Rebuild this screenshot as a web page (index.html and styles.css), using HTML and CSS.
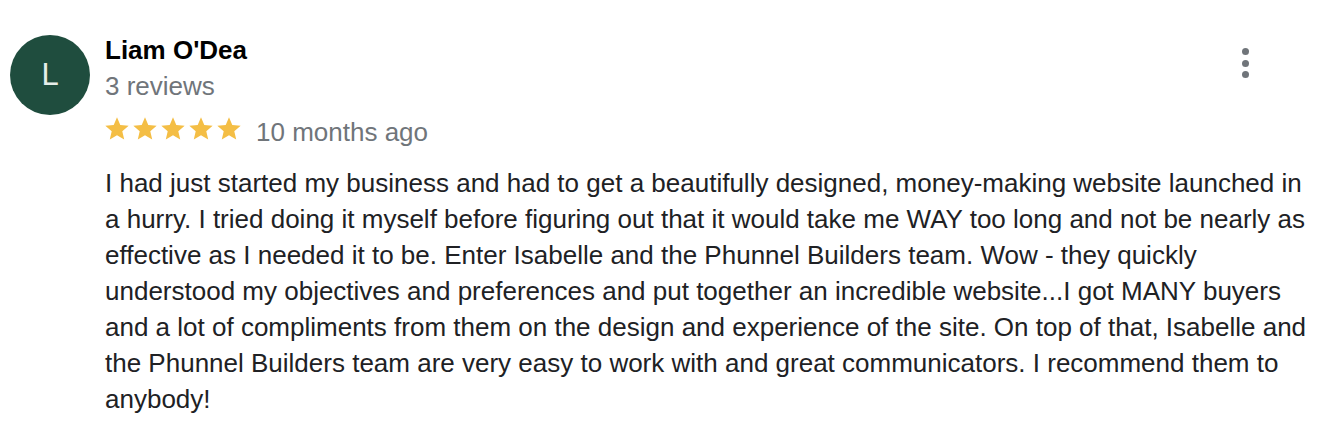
FILE: index.html
```html
<!DOCTYPE html>
<html lang="en">
<head>
<meta charset="utf-8">
<title>Review</title>
<link rel="stylesheet" href="styles.css">
</head>
<body>
<div class="review">
  <div class="avatar">L</div>
  <div class="content">
    <div class="header">
      <div class="author">
        <div class="name">Liam O'Dea</div>
        <div class="count">3 reviews</div>
      </div>
      <button class="menu" aria-label="More options">
        <span class="dot"></span><span class="dot"></span><span class="dot"></span>
      </button>
    </div>
    <div class="rating">
      <div class="stars">
        <svg class="star" viewBox="0 0 24 24"><path d="M12 17.27L18.18 21l-1.64-7.03L22 9.24l-7.19-.61L12 2 9.19 8.63 2 9.24l5.46 4.73L5.82 21z"/></svg>
        <svg class="star" viewBox="0 0 24 24"><path d="M12 17.27L18.18 21l-1.64-7.03L22 9.24l-7.19-.61L12 2 9.19 8.63 2 9.24l5.46 4.73L5.82 21z"/></svg>
        <svg class="star" viewBox="0 0 24 24"><path d="M12 17.27L18.18 21l-1.64-7.03L22 9.24l-7.19-.61L12 2 9.19 8.63 2 9.24l5.46 4.73L5.82 21z"/></svg>
        <svg class="star" viewBox="0 0 24 24"><path d="M12 17.27L18.18 21l-1.64-7.03L22 9.24l-7.19-.61L12 2 9.19 8.63 2 9.24l5.46 4.73L5.82 21z"/></svg>
        <svg class="star" viewBox="0 0 24 24"><path d="M12 17.27L18.18 21l-1.64-7.03L22 9.24l-7.19-.61L12 2 9.19 8.63 2 9.24l5.46 4.73L5.82 21z"/></svg>
      </div>
      <span class="date">10 months ago</span>
    </div>
    <p class="text">I had just started my business and had to get a beautifully designed, money-making website launched in a hurry. I tried doing it myself before figuring out that it would take me WAY too long and not be nearly as effective as I needed it to be. Enter Isabelle and the Phunnel Builders team. Wow - they quickly understood my objectives and preferences and put together an incredible website...I got MANY buyers and a lot of compliments from them on the design and experience of the site. On top of that, Isabelle and the Phunnel Builders team are very easy to work with and great communicators. I recommend them to anybody!</p>
  </div>
</div>
</body>
</html>
```

FILE: styles.css
```css
* { box-sizing: border-box; }

html, body {
  margin: 0;
  padding: 0;
  background: #ffffff;
}

body {
  font-family: "Liberation Sans", Arial, Helvetica, sans-serif;
  color: #202124;
  font-size: 26px;
  line-height: 36px;
}

.review {
  display: flex;
  align-items: flex-start;
  padding: 32px 0 0 10px;
  gap: 15px;
}

.avatar {
  flex: 0 0 80px;
  width: 80px;
  height: 80px;
  margin-top: 3px;
  border-radius: 50%;
  background: #1f4d3e;
  color: #e6ede9;
  font-size: 31px;
  line-height: 80px;
  text-align: center;
}

.content {
  flex: 1 1 auto;
  min-width: 0;
  padding-right: 22px;
}

.header {
  display: flex;
  justify-content: space-between;
  align-items: flex-start;
}

.name {
  font-weight: 700;
  font-size: 26px;
  color: #000000;
}

.count {
  color: #70757a;
  font-size: 26px;
}

.menu {
  border: 0;
  background: none;
  padding: 0;
  margin: 16px 69px 0 0;
  width: 8px;
  display: flex;
  flex-direction: column;
  align-items: center;
  gap: 4.5px;
  cursor: pointer;
}

.dot {
  width: 7px;
  height: 7px;
  border-radius: 50%;
  background: #70757a;
}

.rating {
  display: flex;
  align-items: center;
  margin-top: 10px;
  height: 36px;
}

.stars {
  display: flex;
  margin-left: -2px;
  margin-top: -6px;
}

.star {
  width: 28px;
  height: 28px;
  fill: #f4be45;
}

.date {
  margin-left: 13px;
  color: #70757a;
  font-size: 26px;
}

.text {
  margin: 15px 0 0 0;
  font-size: 26px;
  line-height: 36px;
  color: #202124;
}
```
